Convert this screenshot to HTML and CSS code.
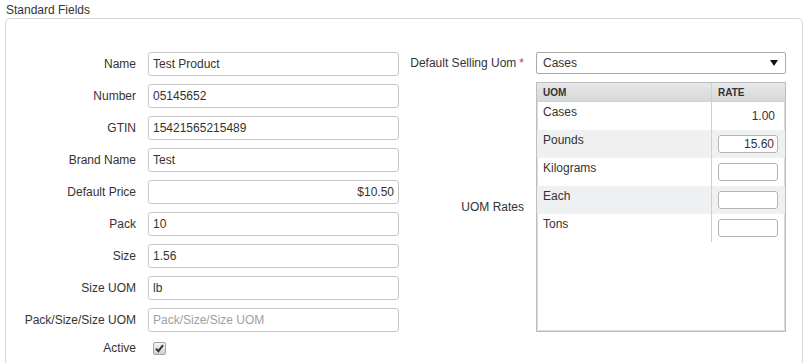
FILE: index.html
```html
<!DOCTYPE html>
<html>

<head>
    <meta charset="UTF-8">
    <title>Standard Fields</title>

    <link rel="stylesheet" href="styles.css">

</head>

<body>

    <div class="legend">Standard Fields</div>

    <div class="panel">
        <div class="col-left">
            <div class="row">
                <label>Name</label>
                <input class="field" type="text" value="Test Product">
            </div>
            <div class="row">
                <label>Number</label>
                <input class="field" type="text" value="05145652">
            </div>
            <div class="row">
                <label>GTIN</label>
                <input class="field" type="text" value="15421565215489">
            </div>
            <div class="row">
                <label>Brand Name</label>
                <input class="field" type="text" value="Test">
            </div>
            <div class="row">
                <label>Default Price</label>
                <input class="field money" type="text" value="$10.50">
            </div>
            <div class="row">
                <label>Pack</label>
                <input class="field" type="text" value="10">
            </div>
            <div class="row">
                <label>Size</label>
                <input class="field" type="text" value="1.56">
            </div>
            <div class="row">
                <label>Size UOM</label>
                <input class="field" type="text" value="lb">
            </div>
            <div class="row">
                <label>Pack/Size/Size UOM</label>
                <input class="field" type="text" placeholder="Pack/Size/Size UOM">
            </div>
            <div class="row row-check">
                <label>Active</label>
                <span class="check">
                    <svg width="9" height="9" viewBox="0 0 9 9">
                        <path d="M1 4.6 L3.4 7.2 L8 1.2" fill="none" stroke="#333" stroke-width="1.9" />
                    </svg>
                </span>
            </div>
        </div>

        <div class="col-right">
            <div class="row">
                <label>Default Selling Uom<span class="req">*</span></label>
                <div class="select">
                    <span>Cases</span>
                    <svg width="8" height="6" viewBox="0 0 8 6">
                        <path d="M0 0 H8 L4 6 Z" fill="#111" />
                    </svg>
                </div>
            </div>
            <div class="row rates">
                <label>UOM Rates</label>
                <div class="rate-box">
                    <table class="rate-table">
                        <thead>
                            <tr>
                                <th class="uom">UOM</th>
                                <th class="rate">Rate</th>
                            </tr>
                        </thead>
                        <tbody>
                            <tr>
                                <td class="uom">Cases</td>
                                <td class="rate fixed">1.00</td>
                            </tr>
                            <tr class="alt">
                                <td class="uom">Pounds</td>
                                <td class="rate"><input class="rate-input" type="text" value="15.60"></td>
                            </tr>
                            <tr>
                                <td class="uom">Kilograms</td>
                                <td class="rate"><input class="rate-input" type="text"></td>
                            </tr>
                            <tr class="alt">
                                <td class="uom">Each</td>
                                <td class="rate"><input class="rate-input" type="text"></td>
                            </tr>
                            <tr>
                                <td class="uom">Tons</td>
                                <td class="rate"><input class="rate-input" type="text"></td>
                            </tr>
                        </tbody>
                    </table>
                </div>
            </div>
        </div>
    </div>

</body>

</html>
```

FILE: styles.css
```css
body {
    margin: 0;
    font-family: "Liberation Sans", Arial, sans-serif;
    font-size: 12px;
    color: #333;
    background: #fff;
    overflow: hidden;
}

.legend {
    padding: 3px 0 0 6px;
    line-height: 14px;
    height: 14px;
    margin-bottom: 1px;
}

.panel {
    display: flex;
    margin-left: 5px;
    width: 796px;
    height: 312px;
    border: 1px solid #d6d6d6;
    border-bottom: none;
    border-radius: 5px 5px 0 0;
    padding-top: 33px;
}

.col-left {
    width: 393px;
}

.row {
    display: flex;
    align-items: center;
    height: 24px;
    margin-bottom: 8px;
}

.row label {
    flex: none;
    text-align: right;
    line-height: 14px;
}

.col-left .row label {
    width: 130px;
    margin-right: 12px;
}

.col-right .row label {
    width: 125px;
    margin-right: 12px;
}

.field {
    width: 251px;
    height: 24px;
    box-sizing: border-box;
    border: 1px solid #c6c6c6;
    border-radius: 3px;
    padding: 0 4px;
    font-family: inherit;
    font-size: 12px;
    color: #333;
    margin: 0;
}

    .field::placeholder {
        color: #a0a0a0;
    }

.money {
    text-align: right;
}

.row-check {
    height: 16px;
    margin-bottom: 0;
}

.check {
    display: flex;
    align-items: center;
    justify-content: center;
    width: 11px;
    height: 11px;
    margin-left: 5px;
    margin-top: 1px;
    border: 1px solid #a5a5a5;
    border-radius: 2px;
    background: linear-gradient(#f4f4f4, #d2d2d2);
}

.col-right {
    flex: 1;
}

    .col-right .row:first-child {
        height: 22px;
    }

.req {
    color: #e0304a;
    margin-left: 3px;
}

.select {
    display: flex;
    align-items: center;
    justify-content: space-between;
    width: 250px;
    height: 22px;
    box-sizing: border-box;
    border: 1px solid #a9a9a9;
    border-radius: 2px;
    padding: 0 7px 0 6px;
}

.rates {
    height: 250px;
    margin-bottom: 0;
}

.rate-box {
    width: 250px;
    height: 250px;
    box-sizing: border-box;
    border: 1px solid #bdbdbd;
    box-shadow: inset 0 0 0 1px #dcdcdc;
}

.rate-table {
    width: 100%;
    border-collapse: collapse;
}

    .rate-table th {
        height: 18px;
        padding: 0 6px;
        text-align: left;
        font-size: 10px;
        font-weight: bold;
        text-transform: uppercase;
        background: linear-gradient(#e6e7e8, #d7d8d9);
        border-bottom: 1px solid #d0d0d0;
    }

    .rate-table td {
        height: 28px;
        padding: 0 6px;
    }

    .rate-table td.uom {
        vertical-align: top;
        padding-top: 3px;
        height: 25px;
    }

    .rate-table .uom {
        width: 162px;
        border-right: 1px solid #cfcfcf;
    }

    .rate-table th.rate {
        border-left: 1px solid #efefef;
    }

    .rate-table td.rate {
        vertical-align: middle;
        text-align: right;
    }

    .rate-table td.fixed {
        padding-right: 10px;
    }

    .rate-table tr.alt td {
        background: #eef0f1;
    }

.rate-input {
    width: 60px;
    height: 18px;
    box-sizing: border-box;
    border: 1px solid #b4b4b4;
    border-radius: 3px;
    padding: 0 3px;
    margin: 0 1px 0 0;
    text-align: right;
    font-family: inherit;
    font-size: 12px;
    color: #333;
    background: #fff;
}
```
